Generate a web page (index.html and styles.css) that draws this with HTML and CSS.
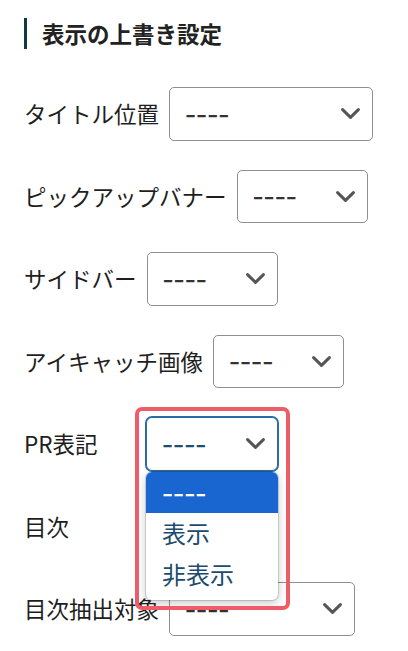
FILE: index.html
```html
<!DOCTYPE html>
<html lang="ja">
<head>
<meta charset="utf-8">
<title>表示の上書き設定</title>
<link rel="stylesheet" href="styles.css">
</head>
<body>
<div class="panel">
  <h2 class="heading">表示の上書き設定</h2>

  <div class="field">
    <span class="label">タイトル位置</span>
    <div class="select w-title"><span class="value">----</span><svg class="chev" viewBox="0 0 19 11" width="19" height="11"><polyline points="1.6,1.6 9.5,9.4 17.4,1.6"/></svg></div>
  </div>

  <div class="field">
    <span class="label">ピックアップバナー</span>
    <div class="select w-std"><span class="value">----</span><svg class="chev" viewBox="0 0 19 11" width="19" height="11"><polyline points="1.6,1.6 9.5,9.4 17.4,1.6"/></svg></div>
  </div>

  <div class="field">
    <span class="label">サイドバー</span>
    <div class="select w-std"><span class="value">----</span><svg class="chev" viewBox="0 0 19 11" width="19" height="11"><polyline points="1.6,1.6 9.5,9.4 17.4,1.6"/></svg></div>
  </div>

  <div class="field">
    <span class="label">アイキャッチ画像</span>
    <div class="select w-std"><span class="value">----</span><svg class="chev" viewBox="0 0 19 11" width="19" height="11"><polyline points="1.6,1.6 9.5,9.4 17.4,1.6"/></svg></div>
  </div>

  <div class="field field--open">
    <span class="label label--wide">PR表記</span>
    <div class="select-wrap">
      <div class="select w-std is-focused"><span class="value">----</span><svg class="chev" viewBox="0 0 19 11" width="19" height="11"><polyline points="1.6,1.6 9.5,9.4 17.4,1.6"/></svg></div>
      <ul class="popup">
        <li class="option is-active"><span class="dashes">----</span></li>
        <li class="option">表示</li>
        <li class="option">非表示</li>
      </ul>
      <div class="highlight-frame"></div>
    </div>
  </div>

  <div class="field">
    <span class="label label--wide">目次</span>
    <div class="select w-std is-covered"><svg class="chev" viewBox="0 0 19 11" width="19" height="11"><polyline points="1.6,1.6 9.5,9.4 17.4,1.6"/></svg></div>
  </div>

  <div class="field">
    <span class="label">目次抽出対象</span>
    <div class="select w-toc"><span class="value">----</span><svg class="chev" viewBox="0 0 19 11" width="19" height="11"><polyline points="1.6,1.6 9.5,9.4 17.4,1.6"/></svg></div>
  </div>
</div>
</body>
</html>
```

FILE: styles.css
```css
* { box-sizing: border-box; }

html, body {
  margin: 0;
  padding: 0;
  background: #ffffff;
}

body {
  font-family: "Noto Sans CJK JP", "Noto Sans", sans-serif;
  color: #1e1e1e;
  font-size: 22.5px;
  overflow: hidden;
}

.panel {
  padding: 18px 0 0 24px;
}

.heading {
  margin: 0;
  height: 31px;
  line-height: 31px;
  border-left: 3px solid #0e3b47;
  padding-left: 15px;
  font-size: 22.5px;
  font-weight: 700;
  color: #222222;
}

.field {
  display: flex;
  align-items: center;
  margin-top: 29px;
}

.heading + .field {
  margin-top: 38px;
}

.label {
  margin-right: 10px;
  line-height: 1.2;
  white-space: nowrap;
}

.label--wide {
  min-width: 112px;
}

.select-wrap {
  position: relative;
}

.select {
  display: flex;
  align-items: center;
  justify-content: space-between;
  height: 53.5px;
  padding: 0 12px 0 15px;
  border: 1px solid #8f8f8f;
  border-radius: 5px;
  background: #ffffff;
}

.select.is-covered {
  justify-content: flex-end;
}

.w-title { width: 203.5px; }
.w-std { width: 131px; }
.w-toc { width: 186px; }

.value,
.dashes {
  display: block;
  color: #333333;
  font-size: 32px;
  line-height: 1.2;
  letter-spacing: 0;
  transform: translateY(-3.5px);
}

.chev {
  display: block;
  flex: none;
}

.chev polyline {
  fill: none;
  stroke: #555555;
  stroke-width: 3;
  stroke-linecap: round;
  stroke-linejoin: round;
}

.select.is-focused {
  width: 132px;
  border-color: #2c6ca4;
  border-radius: 6px;
  box-shadow: 0 0 0 1px #2c6ca4;
}

.select.is-focused .value {
  color: #1e4d70;
}

.popup {
  position: absolute;
  z-index: 5;
  left: 0;
  top: calc(100% + 1.5px);
  width: 131.5px;
  margin: 0;
  padding: 0 0 4.5px;
  list-style: none;
  background: #ffffff;
  border-radius: 6px;
  overflow: hidden;
  box-shadow: 0 0 0 1px rgba(0, 0, 0, 0.14), 0 3px 10px rgba(0, 0, 0, 0.22);
}

.option {
  display: flex;
  align-items: center;
  height: 41.5px;
  padding-left: 16px;
  font-size: 24px;
  line-height: 1.2;
  color: #1c4b6e;
  white-space: nowrap;
}

.option.is-active {
  height: 40.5px;
  background: #1a66d0;
}

.option.is-active .dashes {
  color: #ffffff;
  transform: translateY(-2.5px);
}

.highlight-frame {
  position: absolute;
  z-index: 6;
  left: -11px;
  top: -10px;
  width: 154.5px;
  height: 202.5px;
  border: 4.5px solid #ee5d67;
  border-radius: 7px;
  pointer-events: none;
}
```
